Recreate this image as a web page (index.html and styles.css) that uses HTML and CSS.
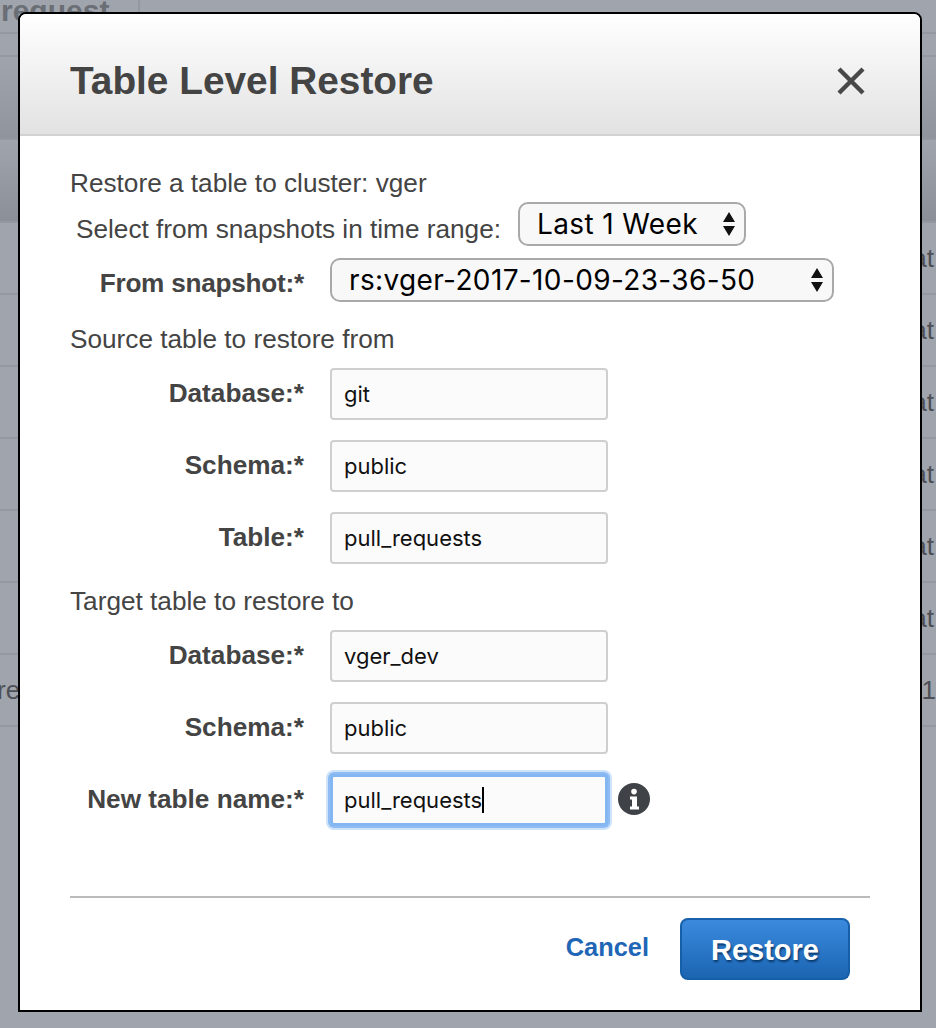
FILE: index.html
```html
<!DOCTYPE html>
<html lang="en">
<head>
  <meta charset="UTF-8" />
  <title>Table Level Restore</title>
  <link rel="stylesheet" href="styles.css">
</head>
<body>
  <div class="backdrop">
    <div class="tabs"><span class="tab-title">request</span></div>
    <div class="band band-sub"></div>
    <div class="band band-top"></div>
    <div class="band band-head"></div>
    <div class="row"><span class="cell-end">at</span></div>
    <div class="row"><span class="cell-end">at</span></div>
    <div class="row"><span class="cell-end">at</span></div>
    <div class="row"><span class="cell-end">at</span></div>
    <div class="row"><span class="cell-end">at</span></div>
    <div class="row"><span class="cell-end">at</span></div>
    <div class="row row-both"><span class="cell-start">red</span><span class="cell-num">01</span></div>
  </div>

  <div class="modal">
    <div class="modal-head">
      <h1>Table Level Restore</h1>
      <svg class="close" width="30" height="30" viewBox="0 0 30 30">
        <path d="M3 3 L27 27 M27 3 L3 27" stroke="#484848" stroke-width="4.4" fill="none" />
      </svg>
    </div>

    <div class="modal-body">
      <p class="line line-cluster">Restore a table to cluster: vger</p>

      <div class="range-row">
        <span>Select from snapshots in time range:</span>
        <div class="select select-range">
          <span>Last 1 Week</span>
          <svg width="14" height="26" viewBox="0 0 14 26"><path d="M7 1 L13 11 H1 Z M7 25 L13 15 H1 Z" fill="#111" /></svg>
        </div>
      </div>

      <div class="form-row form-row-snapshot">
        <label>From snapshot:*</label>
        <div class="select select-snapshot">
          <span>rs:vger-2017-10-09-23-36-50</span>
          <svg width="14" height="26" viewBox="0 0 14 26"><path d="M7 1 L13 11 H1 Z M7 25 L13 15 H1 Z" fill="#111" /></svg>
        </div>
      </div>

      <p class="line line-section">Source table to restore from</p>
      <div class="group">
        <div class="form-row"><label>Database:*</label><div class="field">git</div></div>
        <div class="form-row"><label>Schema:*</label><div class="field">public</div></div>
        <div class="form-row"><label>Table:*</label><div class="field">pull_requests</div></div>
      </div>

      <p class="line line-section">Target table to restore to</p>
      <div class="group">
        <div class="form-row"><label>Database:*</label><div class="field">vger_dev</div></div>
        <div class="form-row"><label>Schema:*</label><div class="field">public</div></div>
        <div class="form-row">
          <label>New table name:*</label>
          <div class="field field-focus">pull_requests<span class="caret"></span></div>
          <svg class="info" width="32" height="32" viewBox="0 0 32 32">
            <circle cx="16" cy="16" r="16" fill="#3f4347" />
            <circle cx="16" cy="8.6" r="2.8" fill="#fff" />
            <path d="M12 13.5 H19 V23.5 H21 V26.5 H12 V23.5 H14 V16.5 H12 Z" fill="#fff" />
          </svg>
        </div>
      </div>
    </div>

    <div class="modal-foot">
      <a class="cancel" href="#">Cancel</a>
      <button class="restore">Restore</button>
    </div>
  </div>
</body>
</html>
```

FILE: styles.css
```css
html, body {
  margin: 0;
  height: 100%;
}

body {
  position: relative;
  overflow: hidden;
  background: #a0a4ac;
  font-family: 'Liberation Sans', Arial, sans-serif;
  color: #444;
}

/* page behind the dialog */
.backdrop {
  height: 1028px;
  overflow: hidden;
}

.tabs {
  height: 32px;
  border-bottom: 2px solid #94989f;
  overflow: hidden;
}

.tab-title {
  display: block;
  width: 140px;
  height: 32px;
  box-sizing: border-box;
  border-right: 2px solid #94989f;
  font-size: 30px;
  font-weight: bold;
  line-height: 22px;
  color: #6a6e75;
  text-indent: 1px;
}

.band {
  border-bottom: 2px solid #94989f;
}

.band-sub {
  height: 21px;
}

.band-top {
  height: 81px;
  background: linear-gradient(to bottom, #a0a4ac, #90949c);
}

.band-head {
  height: 81px;
  background: linear-gradient(to bottom, #a0a4ac, #8b8f97);
}

.row {
  display: flex;
  justify-content: flex-end;
  align-items: center;
  height: 70px;
  border-bottom: 2px solid #94989f;
  font-size: 26px;
  color: #4d5057;
}

.row-both {
  justify-content: space-between;
}

.cell-end {
  margin-right: 2px;
}

.cell-start {
  margin-left: -3px;
}

.cell-num {
  margin-right: 0;
}

/* dialog */
.modal {
  position: absolute;
  left: 18px;
  top: 12px;
  display: flex;
  flex-direction: column;
  width: 904px;
  height: 1000px;
  box-sizing: border-box;
  border: 2px solid #000;
  border-radius: 8px 8px 0 0;
  background: #fff;
}

.modal-head {
  display: flex;
  justify-content: space-between;
  align-items: center;
  height: 106px;
  padding: 14px 54px 0 50px;
  border-bottom: 2px solid #d2d2d2;
  border-radius: 6px 6px 0 0;
  background: linear-gradient(to bottom, #ffffff, #e2e2e2);
}

.modal-head h1 {
  margin: 0;
  font-size: 38.8px;
  font-weight: bold;
  color: #444;
}

.modal-body {
  flex: 1;
  padding: 32px 50px 0;
  font-size: 26.2px;
}

.line {
  margin: 0;
  line-height: 30px;
}

.range-row {
  display: flex;
  align-items: center;
  gap: 17px;
  height: 44px;
  margin: 4px 0 12px 6px;
}

.range-row > span {
  padding-top: 10px;
}

.form-row {
  display: flex;
  align-items: center;
  height: 52px;
}

.form-row label {
  flex: none;
  width: 234px;
  margin: 0 26px 2px 0;
  font-weight: bold;
  text-align: right;
}

.form-row-snapshot {
  height: 44px;
}

.form-row-snapshot label {
  margin-bottom: 0;
  padding-top: 6px;
  letter-spacing: -0.25px;
}

.line-section {
  margin-top: 22px;
}

.group {
  display: flex;
  flex-direction: column;
  gap: 20px;
  margin-top: 14px;
}

.select {
  display: flex;
  justify-content: space-between;
  align-items: center;
  height: 44px;
  box-sizing: border-box;
  border: 2px solid #a9a9a9;
  border-radius: 10px;
  background: #f8f8f8;
  font-family: Inter, 'Liberation Sans', sans-serif;
  font-size: 28px;
  letter-spacing: 0.37px;
  color: #000;
}

.select-range {
  width: 228px;
  padding: 0 8px 0 17px;
}

.select-snapshot {
  width: 504px;
  padding: 0 8px 0 17px;
}

.field {
  display: flex;
  align-items: center;
  width: 278px;
  height: 52px;
  box-sizing: border-box;
  padding: 0 12px;
  border: 2px solid #cfcfcf;
  border-radius: 4px;
  background: #fbfbfb;
  font-family: Inter, 'Liberation Sans', sans-serif;
  font-size: 22px;
  color: #111;
}

.field-focus {
  padding: 0 11px;
  border: 3px solid #84b6f1;
  box-shadow: 0 0 0 2px #8fbdf3, 0 0 0 4px #cfe3fb;
}

.caret {
  width: 2px;
  height: 26px;
  background: #000;
}

.info {
  margin: 0 0 2px 10px;
}

.modal-foot {
  display: flex;
  justify-content: flex-end;
  align-items: center;
  gap: 31px;
  margin: 0 50px;
  height: 114px;
  padding: 20px 20px 30px 0;
  box-sizing: border-box;
  border-top: 2px solid #bbb;
}

.cancel {
  margin-bottom: 4px;
  font-size: 25.4px;
  font-weight: bold;
  color: #1f66b7;
  text-decoration: none;
}

.restore {
  width: 170px;
  height: 62px;
  padding: 2px 0 0;
  border: 2px solid #155fa8;
  border-top-color: #1660ac;
  border-radius: 8px;
  background: linear-gradient(to bottom, #3b8ade, #1b65b2);
  color: #fff;
  font-family: 'Liberation Sans', Arial, sans-serif;
  font-size: 29px;
  font-weight: bold;
  text-shadow: 1px 2px 2px #0b3a6e;
}
```
